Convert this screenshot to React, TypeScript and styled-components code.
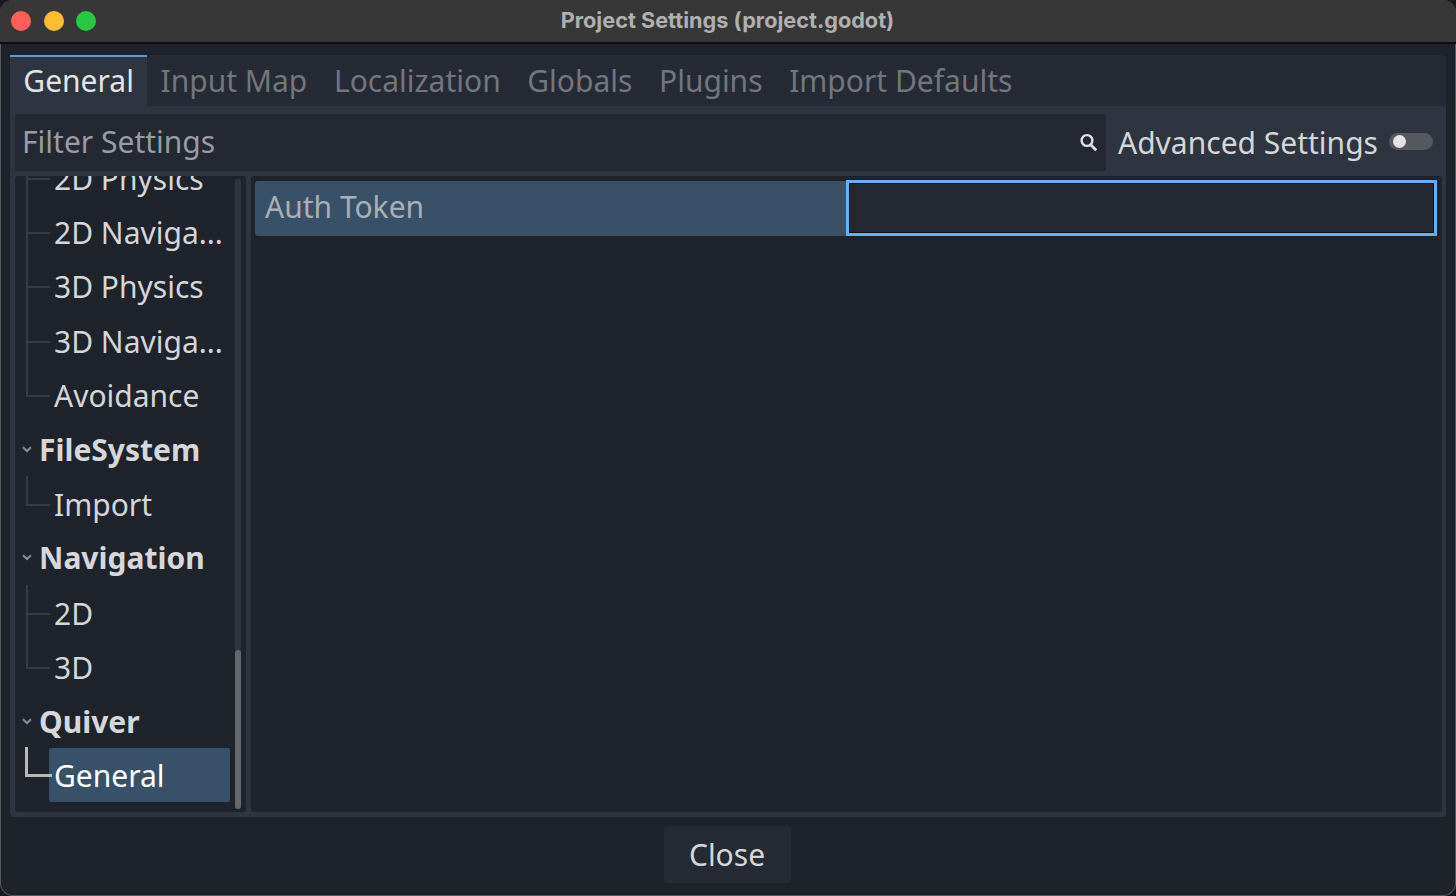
import React from 'react'
import styled, { createGlobalStyle } from 'styled-components'

const tabs = ['General', 'Input Map', 'Localization', 'Globals', 'Plugins', 'Import Defaults']

type TreeRow = { label: string; kind: 'child' | 'section' | 'selected' }

const rows: TreeRow[] = [
    { label: '2D Physics', kind: 'child' },
    { label: '2D Naviga...', kind: 'child' },
    { label: '3D Physics', kind: 'child' },
    { label: '3D Naviga...', kind: 'child' },
    { label: 'Avoidance', kind: 'child' },
    { label: 'FileSystem', kind: 'section' },
    { label: 'Import', kind: 'child' },
    { label: 'Navigation', kind: 'section' },
    { label: '2D', kind: 'child' },
    { label: '3D', kind: 'child' },
    { label: 'Quiver', kind: 'section' },
    { label: 'General', kind: 'selected' },
]

export default function App() {
    return (
        <Window>
            <GlobalStyle />
            <TitleBar>
                <Lights>
                    <Light $color="#ff5f57" />
                    <Light $color="#febc2e" />
                    <Light $color="#28c840" />
                </Lights>
                <Title>Project Settings (project.godot)</Title>
            </TitleBar>
            <Body>
                <TabStrip>
                    {tabs.map((tab, i) => (
                        <Tab key={tab} $active={i === 0}>
                            {tab}
                        </Tab>
                    ))}
                </TabStrip>
                <TabPanel>
                    <FilterRow>
                        <FilterBox>
                            <FilterText>Filter Settings</FilterText>
                            <svg width="20" height="20" viewBox="0 0 20 20" fill="none">
                                <circle cx="9" cy="8.5" r="5.4" stroke="#e2e2e2" strokeWidth="2.4" />
                                <path d="M12.5 12.5L18.2 18.2" stroke="#e2e2e2" strokeWidth="2.8" />
                            </svg>
                        </FilterBox>
                        <AdvancedLabel>Advanced Settings</AdvancedLabel>
                        <Toggle>
                            <Knob />
                        </Toggle>
                    </FilterRow>
                    <Columns>
                        <TreePanel>
                            <TreeList>
                                {rows.map((row, i) => (
                                    <Row
                                        key={i}
                                        $kind={row.kind}
                                        $hasNext={row.kind === 'child' && rows[i + 1]?.kind === 'child'}
                                    >
                                        {row.kind === 'section' && (
                                            <Chevron width="10" height="7" viewBox="0 0 10 7" fill="none">
                                                <path d="M1 1.2L5 5L9 1.2" stroke="#8b8d92" strokeWidth="2" />
                                            </Chevron>
                                        )}
                                        <RowLabel $kind={row.kind}>{row.label}</RowLabel>
                                    </Row>
                                ))}
                            </TreeList>
                            <ScrollTrack>
                                <ScrollThumb />
                            </ScrollTrack>
                        </TreePanel>
                        <PropertyPanel>
                            <PropertyRow>
                                <PropertyName>Auth Token</PropertyName>
                                <PropertyInput />
                            </PropertyRow>
                        </PropertyPanel>
                    </Columns>
                </TabPanel>
                <Footer>
                    <CloseButton>Close</CloseButton>
                </Footer>
            </Body>
        </Window>
    )
}

const GlobalStyle = createGlobalStyle`
    html, body {
        margin: 0;
        height: 100%;
        background: #17191e;
        overflow: hidden;
    }
    * {
        box-sizing: border-box;
    }
`

const Window = styled.div`
    width: 1456px;
    height: 896px;
    display: flex;
    flex-direction: column;
    border-radius: 13px;
    overflow: hidden;
    background: #1e222a;
    font-family: 'Noto Sans', sans-serif;
    font-size: 30px;
    box-shadow: inset 0 0 0 1px #55585d;
`

const TitleBar = styled.div`
    height: 44px;
    flex: none;
    display: flex;
    align-items: center;
    justify-content: center;
    position: relative;
    background: #373737;
    border-bottom: 2px solid #0c0d0f;
`

const Lights = styled.div`
    position: absolute;
    left: 11px;
    top: 11px;
    display: flex;
    gap: 12.5px;
`

const Light = styled.span<{ $color: string }>`
    width: 20px;
    height: 20px;
    border-radius: 50%;
    background: ${(p) => p.$color};
`

const Title = styled.div`
    font-family: 'Inter', sans-serif;
    font-weight: 700;
    font-size: 21.7px;
    color: #b0b0b0;
    margin: -2px 1px 0 0;
`

const Body = styled.div`
    flex: 1;
    min-height: 0;
    display: flex;
    flex-direction: column;
    padding: 11px 10px 0;
`

const TabStrip = styled.div`
    height: 51px;
    flex: none;
    display: flex;
    background: #252a34;
    border-radius: 4px 4px 0 0;
`

const Tab = styled.div<{ $active: boolean }>`
    padding: 0 13.3px 2px;
    display: flex;
    align-items: center;
    color: ${(p) => (p.$active ? '#e2e3e5' : '#73767d')};
    background: ${(p) => (p.$active ? '#2e3440' : 'transparent')};
    border-top: 2px solid ${(p) => (p.$active ? '#5a9ad6' : 'transparent')};
`

const TabPanel = styled.div`
    height: 711px;
    flex: none;
    display: flex;
    flex-direction: column;
    padding: 8px 4px 5px 5px;
    background: #2e3440;
    border-radius: 0 0 4px 4px;
`

const FilterRow = styled.div`
    height: 57px;
    flex: none;
    display: flex;
    align-items: center;
`

const FilterBox = styled.div`
    width: 1091px;
    height: 57px;
    display: flex;
    align-items: center;
    justify-content: space-between;
    padding: 0 8px 2px 7px;
    background: #232832;
    border-radius: 3px 3px 0 0;
`

const FilterText = styled.span`
    color: #9a9ca1;
`

const AdvancedLabel = styled.span`
    margin-left: 12px;
    color: #d5d6d9;
`

const Toggle = styled.div`
    width: 44px;
    height: 17px;
    margin-left: 11px;
    margin-top: -2px;
    padding-left: 4px;
    display: flex;
    align-items: center;
    border-radius: 9px;
    background: #56585f;
`

const Knob = styled.span`
    width: 13px;
    height: 13px;
    border-radius: 50%;
    background: #e4e4e4;
`

const Columns = styled.div`
    flex: 1;
    min-height: 0;
    margin-top: 5px;
    display: flex;
    gap: 5px;
`

const TreePanel = styled.div`
    width: 231px;
    flex: none;
    position: relative;
    overflow: hidden;
    background: #1f232b;
    border-radius: 3px;
`

const TreeList = styled.div`
    display: flex;
    flex-direction: column;
    margin-top: -26px;
    padding-left: 7px;
`

const Row = styled.div<{ $kind: TreeRow['kind']; $hasNext: boolean }>`
    height: 54.4px;
    flex: none;
    display: flex;
    align-items: center;
    position: relative;
    padding-left: ${(p) => (p.$kind === 'section' ? '0' : p.$kind === 'selected' ? '27px' : '32px')};
    padding-top: ${(p) => (p.$kind === 'child' ? '2px' : '0')};

    &::before {
        content: ${(p) => (p.$kind === 'section' ? 'none' : "''")};
        position: absolute;
        left: ${(p) => (p.$kind === 'selected' ? '3px' : '4px')};
        top: ${(p) => (p.$kind === 'selected' ? '-1px' : '0')};
        width: ${(p) => (p.$kind === 'selected' ? '24px' : '22px')};
        height: ${(p) => (p.$kind === 'selected' ? '27px' : '27.5px')};
        border-left: ${(p) => (p.$kind === 'selected' ? '3px solid #b9b9b9' : '2px solid #373b45')};
        border-bottom: ${(p) => (p.$kind === 'selected' ? '3px solid #b9b9b9' : '2px solid #373b45')};
    }

    &::after {
        content: ${(p) => (p.$hasNext ? "''" : 'none')};
        position: absolute;
        left: 4px;
        top: 27.5px;
        bottom: 0;
        width: 2px;
        background: #373b45;
    }
`

const Chevron = styled.svg`
    flex: none;
    margin: 0 7px 0 0;
`

const RowLabel = styled.span<{ $kind: TreeRow['kind'] }>`
    white-space: nowrap;
    color: ${(p) => (p.$kind === 'selected' ? '#ffffff' : p.$kind === 'section' ? '#d6d7da' : '#d5d6d9')};
    font-weight: ${(p) => (p.$kind === 'section' ? 700 : 400)};
    ${(p) =>
        p.$kind === 'selected' &&
        `
        width: 181px;
        height: 54px;
        padding-left: 5px;
        display: flex;
        align-items: center;
        background: #395168;
        border-radius: 2px;
    `}
`

const ScrollTrack = styled.div`
    position: absolute;
    top: 3px;
    right: 5px;
    bottom: 3px;
    width: 6px;
    border-radius: 3px;
    background: #2e3440;
`

const ScrollThumb = styled.div`
    position: absolute;
    left: 0;
    right: 0;
    top: 471px;
    bottom: 0;
    border-radius: 3px;
    background: #64676d;
`

const PropertyPanel = styled.div`
    flex: 1;
    min-width: 0;
    padding: 4px 5px 0 4px;
    background: #1f232b;
    border-radius: 3px;
`

const PropertyRow = styled.div`
    height: 56px;
    display: flex;
`

const PropertyName = styled.div`
    width: 591px;
    height: 55px;
    margin-top: 1px;
    padding: 0 0 5px 10px;
    display: flex;
    align-items: center;
    color: #a9afb6;
    background: #395168;
    border-radius: 3px 0 0 3px;
`

const PropertyInput = styled.div`
    flex: 1;
    background: #232832;
    border: 3px solid #5eb2f5;
    outline: 1px solid #0d0f12;
    outline-offset: -4px;
`

const Footer = styled.div`
    flex: 1;
    display: flex;
    justify-content: center;
    padding: 9px 2px 0 0;
`

const CloseButton = styled.div`
    width: 127px;
    height: 57px;
    display: flex;
    align-items: center;
    justify-content: center;
    color: #d5d6d9;
    background: #252a34;
    border-radius: 3px;
`
